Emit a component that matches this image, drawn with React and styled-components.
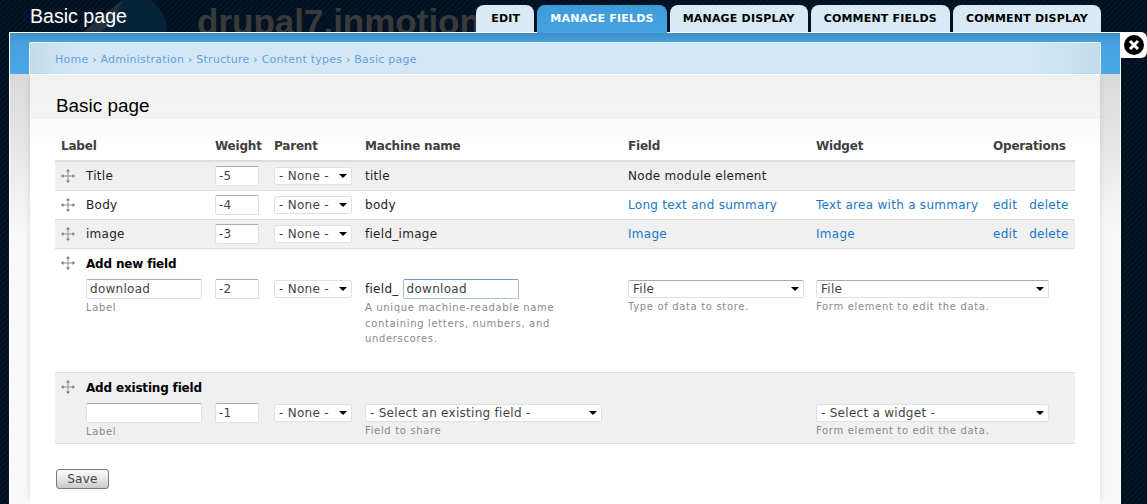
import styled, { createGlobalStyle } from "styled-components";

const GlobalStyle = createGlobalStyle`
  html, body {
    margin: 0;
    padding: 0;
    height: 504px;
    overflow: hidden;
    background: #00101f;
  }
  * {
    box-sizing: border-box;
  }
`;

const Screen = styled.div`
  position: relative;
  width: 1147px;
  height: 504px;
  overflow: hidden;
  font-family: "DejaVu Sans", Verdana, sans-serif;
  background: repeating-linear-gradient(135deg, #00101f 0 2px, #03162a 2px 4px);
`;

const Header = styled.header`
  position: relative;
  z-index: 2;
  display: flex;
  height: 32px;
  padding-left: 30px;
  padding-right: 46px;
`;

const Swoosh = styled.svg`
  position: absolute;
  left: 78px;
  top: 0;
`;

const PageName = styled.h2`
  position: relative;
  margin: 0;
  width: 167px;
  flex: none;
  color: #fff;
  font: 400 19.6px/33px "Liberation Sans", Arial, sans-serif;
`;

const SiteName = styled.div`
  flex: 1;
  min-width: 0;
  overflow: hidden;
  white-space: nowrap;
  color: #3a3a3a;
  font: 700 35px/44px "Liberation Sans", Arial, sans-serif;
`;

const Tabs = styled.nav`
  display: flex;
  gap: 3px;
  padding-top: 5px;
`;

const Tab = styled.a`
  display: block;
  height: ${(p) => (p.$active ? "28px" : "27px")};
  padding: 0 13px;
  border-radius: 8px 8px 0 0;
  background: ${(p) => (p.$active ? "linear-gradient(#3d9bd9, #46a3e0)" : "#d9e9f6")};
  color: ${(p) => (p.$active ? "#fff" : "#000")};
  font-size: 11px;
  font-weight: 700;
  line-height: 27px;
  letter-spacing: 0.2px;
  text-transform: uppercase;

  &:first-child {
    padding: 0 14px 0 15px;
  }
`;

const Overlay = styled.main`
  width: 1112px;
  height: 472px;
  margin-left: 9px;
  border: 1px solid #fff;
  border-bottom: 0;
  background: linear-gradient(#d9d9d9 42px, #f8f8f8 200px);
`;

const Band = styled.div`
  height: 41px;
  padding: 9px 19px 0;
  background: linear-gradient(#3f8fc8, #47a0de 10px, #4aa8e8);
`;

const Breadcrumb = styled.div`
  height: 32px;
  padding-left: 25px;
  border: 1px solid #e6f2fb;
  border-bottom: 0;
  border-radius: 2px 2px 0 0;
  background: linear-gradient(90deg, #c4dcea, #d2e8f7 50px, #d2e8f7 1000px, #c4dcea);
  color: #6b9fe0;
  font-size: 11px;
  letter-spacing: 0.23px;
  line-height: 33px;
`;

const Crumb = styled.span`
  &:not(:last-child)::after {
    content: " › ";
    color: #7c8c9c;
  }
`;

const Content = styled.div`
  height: 430px;
  margin: 0 20px;
  padding: 0 25px;
  border-top: 1px solid #fff;
  background: linear-gradient(#f0f0f0, #f4f4f4 42px, #ececec 42px, #ececec 43px, #f8f8f8 43px, #fff 70px);
  box-shadow: -4px 0 6px -4px rgba(0, 0, 0, 0.12), 4px 0 6px -4px rgba(0, 0, 0, 0.12);
`;

const Title = styled.h1`
  margin: 0 0 0 1px;
  height: 55px;
  padding-top: 20px;
  color: #000;
  font: 400 18.9px/22px "Liberation Sans", Arial, sans-serif;
`;

const Table = styled.table`
  width: 1020px;
  border-collapse: collapse;
  table-layout: fixed;
  color: #222;
  font-size: 12px;
  letter-spacing: 0.28px;
`;

const Th = styled.th`
  height: 31px;
  padding: 2px 6px 0;
  border-bottom: 2px solid #ddd;
  color: #3f3f3f;
  font-weight: 700;
  letter-spacing: -0.2px;
  text-align: left;
`;

const Row = styled.tr`
  background: ${(p) => (p.$shade ? "#f0f0f0" : "#fff")};
  border-bottom: ${(p) => (p.$open ? "0" : "1px solid #ddd")};
`;

const SelectBox = styled.div`
  position: relative;
  width: ${(p) => p.$w}px;
  height: 18px;
  padding-left: 4px;
  border: 1px solid #dce0ea;
  border-top-color: ${(p) => (p.$dark ? "#a8a8b0" : "#dce0ea")};
  border-radius: 2px;
  background: #fff;
  color: #444;
  line-height: 16px;
  white-space: nowrap;

  &::after {
    content: "";
    position: absolute;
    right: 4px;
    top: 6px;
    border: 4px solid transparent;
    border-top: 4px solid #000;
    border-bottom: 0;
    width: 0;
    height: 0;
  }
`;

const Td = styled.td`
  height: ${(p) => p.$h || "29px"};
  padding: ${(p) => (p.$top ? "3px 6px 0" : "1px 6px 0")};
  vertical-align: ${(p) => (p.$top ? "top" : "middle")};

  & > ${SelectBox} {
    margin-top: ${(p) => (p.$top ? "1px" : "0")};
  }
`;

const GroupTd = styled.td`
  height: 28px;
  padding: 3px 6px 0;
`;

const LabelCell = styled.div`
  display: flex;
  align-items: center;
  gap: 11px;
  white-space: nowrap;
  font-weight: ${(p) => (p.$bold ? 700 : 400)};
  letter-spacing: ${(p) => (p.$bold ? "-0.18px" : "inherit")};
  color: ${(p) => (p.$bold ? "#000" : "inherit")};
`;

const Indent = styled.div`
  padding-left: 25px;
`;

const Link = styled.a`
  color: #1a78c8;
  white-space: nowrap;
  & + & {
    margin-left: 12px;
  }
`;

const Input = styled.input`
  display: block;
  width: ${(p) => p.$w}px;
  height: 20px;
  padding: 0 3px;
  border: 1px solid #dce0ea;
  border-top-color: #a8a8b0;
  border-radius: 2px;
  background: #fff;
  color: #444;
  font: 12px "DejaVu Sans", Verdana, sans-serif;
  letter-spacing: 0.28px;
  outline: none;
`;

const FocusInput = styled(Input)`
  border-color: #a4c4de;
  border-top-color: #6f9dc0;
`;

const Hint = styled.div`
  max-width: 215px;
  color: #8a8a8a;
  font-size: 10px;
  letter-spacing: 0.66px;
  line-height: 15.5px;
  padding-top: 1px;
`;

const MachineLine = styled.div`
  display: flex;
  align-items: center;
  gap: 4px;
`;

const SaveButton = styled.button`
  display: block;
  width: 53px;
  height: 20px;
  margin: 25px 0 0 1px;
  padding: 0;
  border: 1px solid #7a7a7a;
  border-radius: 3px;
  background: linear-gradient(#fbfbfb, #e8e8e8 50%, #c8c8c8);
  color: #444;
  font: 12px "DejaVu Sans", Verdana, sans-serif;
  letter-spacing: 0.28px;
`;

const CloseTab = styled.div`
  position: absolute;
  left: 1121px;
  top: 32px;
  display: flex;
  align-items: center;
  justify-content: center;
  width: 26px;
  height: 26px;
  border-radius: 0 6px 6px 0;
  background: #fff;
`;

const Handle = styled.svg`
  flex: none;
  margin-top: -1px;
`;

function DragHandle() {
  return (
    <Handle width="14" height="14" viewBox="0 0 14 14">
      <path d="M7 2v10M2 7h10" stroke="#8f8f8f" strokeWidth="1" fill="none" />
      <path d="M7 0l2 2.5H5zM7 14l2-2.5H5zM0 7l2.5-2v4zM14 7l-2.5-2v4z" fill="#777" />
    </Handle>
  );
}

function None() {
  return <SelectBox $w={78}>- None -</SelectBox>;
}

const crumbs = ["Home", "Administration", "Structure", "Content types", "Basic page"];
const tabs = ["Edit", "Manage fields", "Manage display", "Comment fields", "Comment display"];
const widths = [154, 59, 91, 263, 188, 177, 88];

const fields = [
  { label: "Title", weight: "-5", name: "title", field: "Node module element" },
  { label: "Body", weight: "-4", name: "body", field: "Long text and summary", widget: "Text area with a summary" },
  { label: "image", weight: "-3", name: "field_image", field: "Image", widget: "Image" },
];

export default function App() {
  return (
    <Screen>
      <GlobalStyle />
      <Header>
        <Swoosh width="100" height="32" viewBox="0 0 100 32">
          <path d="M6 32C20 22 34 12 44 0H72C84 8 90 20 88 32Z" fill="#062338" />
          <path d="M6 32C14 24 30 12 44 0L38 16 24 32Z" fill="#23313c" />
        </Swoosh>
        <PageName>Basic page</PageName>
        <SiteName>drupal7.inmotion</SiteName>
        <Tabs>
          {tabs.map((t, i) => (
            <Tab key={t} $active={i === 1}>{t}</Tab>
          ))}
        </Tabs>
      </Header>

      <Overlay>
        <Band>
          <Breadcrumb>
            {crumbs.map((c) => (
              <Crumb key={c}>{c}</Crumb>
            ))}
          </Breadcrumb>
        </Band>
        <Content>
          <Title>Basic page</Title>
          <Table>
            <colgroup>
              {widths.map((w, i) => (
                <col key={i} style={{ width: w }} />
              ))}
            </colgroup>
            <thead>
              <tr>
                <Th>Label</Th>
                <Th>Weight</Th>
                <Th>Parent</Th>
                <Th>Machine name</Th>
                <Th>Field</Th>
                <Th>Widget</Th>
                <Th>Operations</Th>
              </tr>
            </thead>
            <tbody>
              {fields.map((f, i) => (
                <Row key={f.name} $shade={i !== 1}>
                  <Td>
                    <LabelCell>
                      <DragHandle />
                      {f.label}
                    </LabelCell>
                  </Td>
                  <Td><Input $w={44} defaultValue={f.weight} /></Td>
                  <Td><None /></Td>
                  <Td>{f.name}</Td>
                  <Td>{f.widget ? <Link>{f.field}</Link> : f.field}</Td>
                  <Td>{f.widget && <Link>{f.widget}</Link>}</Td>
                  <Td>
                    {f.widget && (
                      <>
                        <Link>edit</Link>
                        <Link>delete</Link>
                      </>
                    )}
                  </Td>
                </Row>
              ))}

              <Row $open>
                <GroupTd colSpan={7}>
                  <LabelCell $bold>
                    <DragHandle />
                    Add new field
                  </LabelCell>
                </GroupTd>
              </Row>
              <Row>
                <Td $top $h="96px">
                  <Indent>
                    <Input $w={116} defaultValue="download" />
                    <Hint>Label</Hint>
                  </Indent>
                </Td>
                <Td $top><Input $w={44} defaultValue="-2" /></Td>
                <Td $top><None /></Td>
                <Td $top>
                  <MachineLine>
                    field_
                    <FocusInput $w={116} defaultValue="download" />
                  </MachineLine>
                  <Hint>A unique machine-readable name containing letters, numbers, and underscores.</Hint>
                </Td>
                <Td $top>
                  <SelectBox $w={176} $dark>File</SelectBox>
                  <Hint>Type of data to store.</Hint>
                </Td>
                <Td $top colSpan={2}>
                  <SelectBox $w={233} $dark>File</SelectBox>
                  <Hint>Form element to edit the data.</Hint>
                </Td>
              </Row>

              <Row $open $shade>
                <GroupTd colSpan={7}>
                  <LabelCell $bold>
                    <DragHandle />
                    Add existing field
                  </LabelCell>
                </GroupTd>
              </Row>
              <Row $shade>
                <Td $top $h="43px">
                  <Indent>
                    <Input $w={116} />
                    <Hint>Label</Hint>
                  </Indent>
                </Td>
                <Td $top><Input $w={44} defaultValue="-1" /></Td>
                <Td $top><None /></Td>
                <Td $top>
                  <SelectBox $w={237}>- Select an existing field -</SelectBox>
                  <Hint>Field to share</Hint>
                </Td>
                <Td $top />
                <Td $top colSpan={2}>
                  <SelectBox $w={233}>- Select a widget -</SelectBox>
                  <Hint>Form element to edit the data.</Hint>
                </Td>
              </Row>
            </tbody>
          </Table>
          <SaveButton>Save</SaveButton>
        </Content>
      </Overlay>

      <CloseTab>
        <svg width="22" height="22" viewBox="0 0 22 22">
          <circle cx="11" cy="11" r="10" fill="#000" />
          <path d="M7 7l8 8M15 7l-8 8" stroke="#fff" strokeWidth="3" />
        </svg>
      </CloseTab>
    </Screen>
  );
}
